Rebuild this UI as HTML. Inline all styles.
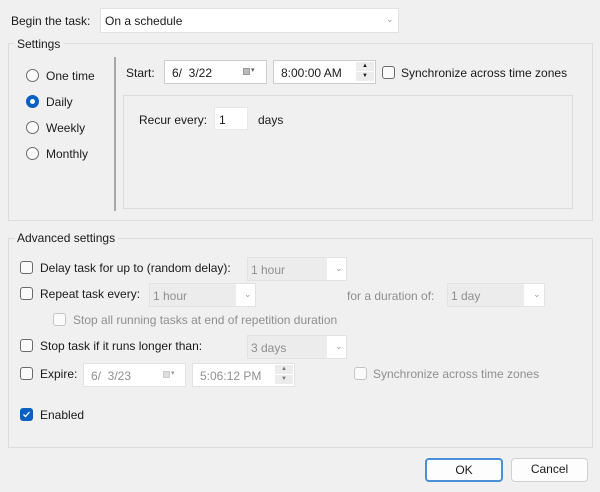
<!DOCTYPE html>
<html><head><style>
*{box-sizing:border-box}
body{margin:0;width:600px;height:492px;background:#f0f0f0;font-family:"Liberation Sans",sans-serif;font-size:12px;color:#1a1a1a;position:relative;overflow:hidden}
.a{position:absolute;white-space:nowrap}
.t{position:absolute;line-height:14px;white-space:nowrap}
.box{position:absolute;background:#fff;border:1px solid #e2e2e2}
.grp{position:absolute;border:1px solid #dcdcdc}
.rad{position:absolute;width:13px;height:13px;border:1px solid #6b6b6b;border-radius:50%;background:#fafafa}
.cb{position:absolute;width:13px;height:13px;border:1px solid #6b6b6b;border-radius:3px;background:#fafafa}
.dis{color:#8f8f8f}
.cbd{border-color:#c4c4c4}
.chev{position:absolute;color:#999;font-size:9px}
.gf{position:absolute;background:#ececec}
.btn{position:absolute;background:#fdfdfd;border:1px solid #d0d0d0;border-radius:4px;text-align:center;line-height:21px}
</style></head><body>
<div class="t" style="left:11px;top:14px">Begin the task:</div>
<div class="box" style="left:100px;top:8px;width:299px;height:25px"></div>
<div class="t" style="left:105px;top:14px">On a schedule</div>
<div class="chev" style="left:386px;top:14px">&#8964;</div>

<div class="grp" style="left:8px;top:43px;width:585px;height:178px"></div>
<div class="t" style="left:14px;top:37px;background:#f0f0f0;padding:0 3px">Settings</div>
<div class="a" style="left:114px;top:57px;width:2px;height:154px;background:#a8a8a8"></div>

<div class="rad" style="left:26px;top:69px"></div><div class="t" style="left:46px;top:69px">One time</div>
<div class="rad" style="left:26px;top:95px;border:4px solid #0a5fc2;background:#fff"></div><div class="t" style="left:46px;top:95px">Daily</div>
<div class="rad" style="left:26px;top:121px"></div><div class="t" style="left:46px;top:121px">Weekly</div>
<div class="rad" style="left:26px;top:147px"></div><div class="t" style="left:46px;top:147px">Monthly</div>

<div class="t" style="left:126px;top:66px">Start:</div>
<div class="box" style="left:164px;top:60px;width:103px;height:24px;border-color:#ccc"></div>
<div class="t" style="left:172px;top:66px">6/&nbsp; 3/22</div>
<div class="a" style="left:243px;top:68px;width:7px;height:7px;background:#bbb;border:1px solid #999"></div>
<div class="chev" style="left:251px;top:66px;color:#555;font-size:7px">&#9662;</div>
<div class="box" style="left:273px;top:60px;width:103px;height:24px;border-color:#ccc"></div>
<div class="t" style="left:281px;top:66px">8:00:00 AM</div>
<div class="a" style="left:356px;top:62px;width:18px;height:9px;background:#ececec;font-size:6px;text-align:center;line-height:9px">&#9650;</div>
<div class="a" style="left:356px;top:72px;width:18px;height:9px;background:#ececec;font-size:6px;text-align:center;line-height:9px">&#9660;</div>
<div class="cb" style="left:382px;top:66px"></div>
<div class="t" style="left:401px;top:66px">Synchronize across time zones</div>

<div class="grp" style="left:123px;top:95px;width:450px;height:114px"></div>
<div class="t" style="left:139px;top:113px">Recur every:</div>
<div class="box" style="left:214px;top:107px;width:34px;height:23px;border-color:#e8e8e8"></div>
<div class="t" style="left:219px;top:113px">1</div>
<div class="t" style="left:258px;top:113px">days</div>

<div class="grp" style="left:8px;top:238px;width:585px;height:210px"></div>
<div class="t" style="left:14px;top:231px;background:#f0f0f0;padding:0 3px">Advanced settings</div>

<div class="cb" style="left:20px;top:261px"></div><div class="t" style="left:40px;top:261px">Delay task for up to (random delay):</div>
<div class="box" style="left:247px;top:257px;width:100px;height:24px"></div><div class="gf" style="left:248px;top:258px;width:79px;height:22px"></div>
<div class="t dis" style="left:251px;top:263px">1 hour</div><div class="chev" style="left:335px;top:263px">&#8964;</div>

<div class="cb" style="left:20px;top:287px"></div><div class="t" style="left:40px;top:287px">Repeat task every:</div>
<div class="box" style="left:149px;top:283px;width:107px;height:24px"></div><div class="gf" style="left:150px;top:284px;width:86px;height:22px"></div>
<div class="t dis" style="left:153px;top:289px">1 hour</div><div class="chev" style="left:244px;top:289px">&#8964;</div>
<div class="t dis" style="left:347px;top:289px">for a duration of:</div>
<div class="box" style="left:447px;top:283px;width:98px;height:24px"></div><div class="gf" style="left:448px;top:284px;width:76px;height:22px"></div>
<div class="t dis" style="left:451px;top:289px">1 day</div><div class="chev" style="left:533px;top:289px">&#8964;</div>

<div class="cb cbd" style="left:53px;top:313px"></div><div class="t dis" style="left:73px;top:313px">Stop all running tasks at end of repetition duration</div>

<div class="cb" style="left:20px;top:339px"></div><div class="t" style="left:40px;top:339px">Stop task if it runs longer than:</div>
<div class="box" style="left:247px;top:335px;width:100px;height:24px"></div><div class="gf" style="left:248px;top:336px;width:79px;height:22px"></div>
<div class="t dis" style="left:251px;top:341px">3 days</div><div class="chev" style="left:335px;top:341px">&#8964;</div>

<div class="cb" style="left:20px;top:367px"></div><div class="t" style="left:40px;top:367px">Expire:</div>
<div class="box" style="left:83px;top:363px;width:103px;height:24px"></div>
<div class="t dis" style="left:91px;top:369px">6/&nbsp; 3/23</div>
<div class="a" style="left:163px;top:371px;width:7px;height:7px;background:#ddd;border:1px solid #ccc"></div>
<div class="chev" style="left:171px;top:369px;font-size:7px">&#9662;</div>
<div class="box" style="left:192px;top:363px;width:103px;height:24px"></div>
<div class="t dis" style="left:200px;top:369px">5:06:12 PM</div>
<div class="a" style="left:275px;top:365px;width:18px;height:9px;background:#ececec;font-size:6px;text-align:center;line-height:9px;color:#777">&#9650;</div>
<div class="a" style="left:275px;top:375px;width:18px;height:9px;background:#ececec;font-size:6px;text-align:center;line-height:9px;color:#777">&#9660;</div>
<div class="cb cbd" style="left:354px;top:367px"></div>
<div class="t dis" style="left:373px;top:367px">Synchronize across time zones</div>

<div class="cb" style="left:20px;top:408px;background:#0a5fc2;border-color:#0a5fc2"><svg width="11" height="11" style="position:absolute;left:0;top:0"><path d="M2.5 5.5 L4.5 7.5 L8.5 3" stroke="#fff" stroke-width="1.3" fill="none"/></svg></div>
<div class="t" style="left:40px;top:408px">Enabled</div>

<div class="btn" style="left:425px;top:458px;width:78px;height:24px;border:2px solid #4a90d9">OK</div>
<div class="btn" style="left:511px;top:458px;width:77px;height:24px">Cancel</div>
</body></html>
